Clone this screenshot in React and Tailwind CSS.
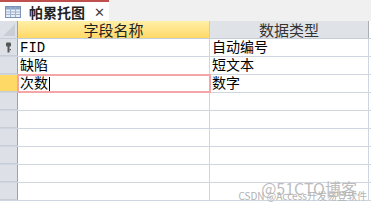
import React from 'react';

const rows = [
  { name: 'FID', type: '自动编号', key: true },
  { name: '缺陷', type: '短文本' },
  { name: '次数', type: '数字', current: true },
  {}, {}, {}, {}, {}, {},
];

const cellFont = { fontFamily: '"Liberation Mono", "Noto Sans CJK SC", monospace' };

function TableIcon() {
  return (
    <svg width="16" height="12" viewBox="0 0 16 12">
      <rect x="0.5" y="0.5" width="15" height="11" fill="#e8eef7" stroke="#7d93b5" />
      <rect x="1" y="1" width="14" height="2.5" fill="#8aa3c8" />
      <path d="M1 6h14M1 8.5h14M5.5 1v10M10.5 1v10" stroke="#9fb1cc" strokeWidth="1" />
    </svg>
  );
}

function KeyIcon() {
  return (
    <svg width="7" height="11" viewBox="0 0 7 11">
      <rect x="1" y="0.5" width="5" height="4" rx="1" fill="#555" />
      <rect x="2.5" y="4" width="2" height="6.5" fill="#555" />
      <rect x="4.5" y="7" width="1.5" height="1.2" fill="#555" />
    </svg>
  );
}

export default function App() {
  return (
    <div
      className="relative w-[371px] h-[207px] overflow-hidden bg-white"
      style={{ fontFamily: '"Noto Sans CJK SC", "Liberation Sans", sans-serif' }}
    >
      <div className="flex h-[21px] bg-[#f0f0f0]">
        <div className="flex items-center w-[109px] h-[21px] bg-white border-t-2 border-[#c0504d] pl-[5px]">
          <TableIcon />
          <span className="ml-[8px] text-[14px] font-bold leading-none text-[#222]">帕累托图</span>
          <span className="ml-auto mr-[4px] text-[13px] leading-none text-[#444]">✕</span>
        </div>
      </div>

      <div className="flex h-[18px] border-b border-[#c5cdd9]">
        <div className="w-[18px] bg-[#dde1e7] border-r border-[#9aa0a8] relative">
          <div className="absolute right-[2px] bottom-[2px] w-0 h-0 border-l-[12px] border-l-transparent border-b-[12px] border-b-[#c9ced6]" />
        </div>
        <div className="w-[192px] flex items-center justify-center bg-gradient-to-b from-[#ffefa6] to-[#ffd866] border-r border-[#c5cdd9] text-[15px] leading-none text-[#222]">
          字段名称
        </div>
        <div className="w-[159px] flex items-center justify-center bg-[#dfe3e8] border-r border-[#a9adb3] text-[15px] leading-none text-[#333]">
          数据类型
        </div>
      </div>

      {rows.map((r, i) => (
        <div key={i} className="flex h-[18px] border-b border-[#cfd6e0]" style={cellFont}>
          <div
            className={
              'w-[18px] flex items-center justify-center border-r border-[#9aa0a8] border-b border-b-[#c9ced6] ' +
              (r.current ? 'bg-[#ffd966]' : 'bg-[#dde1e7]')
            }
          >
            {r.key ? <KeyIcon /> : null}
          </div>
          <div
            className={
              'w-[192px] flex items-center pl-[2px] border-r border-[#cfd6e0] text-[14px] leading-none text-black ' +
              (r.current ? 'outline-2 outline-[#f4a5a8] -outline-offset-1' : '')
            }
          >
            {r.name}
            {r.current ? <span className="ml-[1px] w-px h-[14px] bg-black" /> : null}
          </div>
          <div className="w-[159px] flex items-center pl-[2px] border-r border-[#cfd6e0] text-[14px] leading-none text-black">
            {r.type}
          </div>
        </div>
      ))}

      <div className="absolute right-[14px] bottom-[11px] text-[16px] leading-none text-[#bdbdbd]">@51CTO博客</div>
      <div className="absolute right-[4px] bottom-[6px] text-[10px] leading-none text-[#b3b3b3]">CSDN @Access开发易登软件</div>
    </div>
  );
}
